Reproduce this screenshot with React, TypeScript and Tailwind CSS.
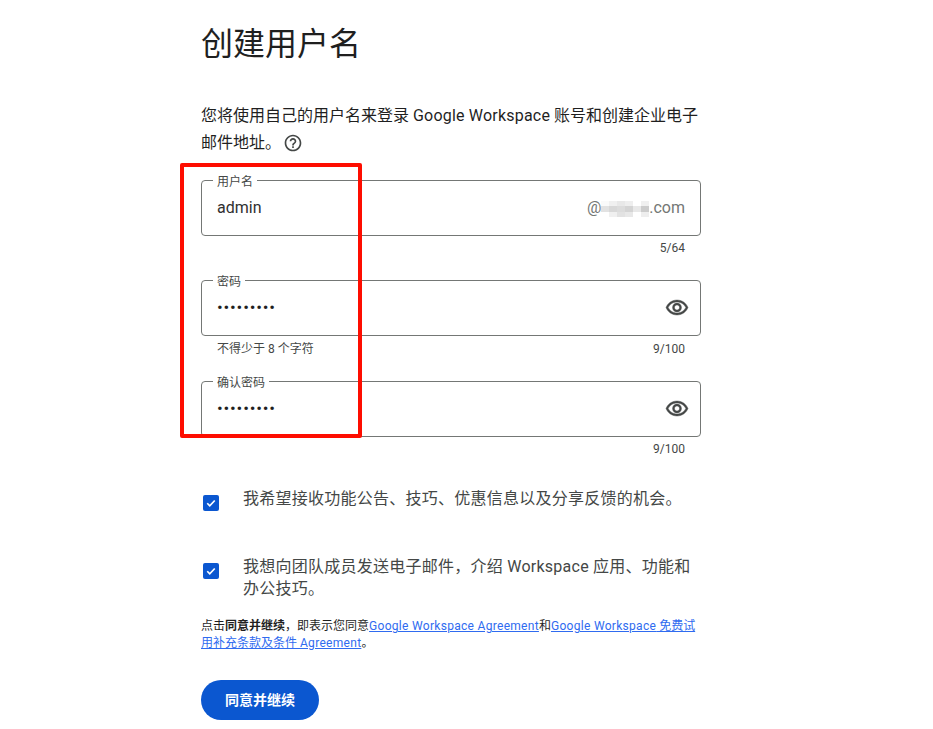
const font = { fontFamily: '"Roboto", "Noto Sans CJK SC", sans-serif' };

const EYE =
  "M12 6c3.79 0 7.17 2.13 8.82 5.5C19.17 14.87 15.79 17 12 17s-7.17-2.13-8.82-5.5C4.83 8.13 8.21 6 12 6m0-2C7 4 2.73 7.11 1 11.5 2.73 15.89 7 19 12 19s9.27-3.11 11-7.5C21.27 7.11 17 4 12 4zm0 5c1.38 0 2.5 1.12 2.5 2.5S13.38 14 12 14s-2.5-1.12-2.5-2.5S10.62 9 12 9m0-2c-2.48 0-4.5 2.02-4.5 4.5S9.52 16 12 16s4.5-2.02 4.5-4.5S14.48 7 12 7z";
const HELP =
  "M11 18h2v-2h-2v2zm1-16C6.48 2 2 6.48 2 12s4.48 10 10 10 10-4.48 10-10S17.52 2 12 2zm0 18c-4.41 0-8-3.59-8-8s3.59-8 8-8 8 3.59 8 8-3.59 8-8 8zm0-14c-2.21 0-4 1.79-4 4h2c0-1.1.9-2 2-2s2 .9 2 2c0 2-3 1.75-3 5h2c0-2.25 3-2.5 3-5 0-2.21-1.79-4-4-4z";

function Eye() {
  return (
    <svg width="24" height="24" viewBox="0 0 24 24" fill="#444746" stroke="#444746" strokeWidth="0.4" className="-mr-[4px]">
      <path d={EYE} />
    </svg>
  );
}

function Field({ label, value, right, dots }: { label: string; value: string; right?: React.ReactNode; dots?: boolean }) {
  return (
    <div className="relative flex h-14 items-center justify-between rounded border border-[#747775] px-[15px]">
      <span className="absolute -top-[6px] left-[11px] bg-white px-1 text-xs leading-[14px] text-[#444746]">{label}</span>
      <span className={dots ? "-mt-[1px] text-[17px] tracking-[0.8px] text-[#1f1f1f]" : "-mt-[1px] text-base text-[#303030]"}>{value}</span>
      {right}
    </div>
  );
}

function Check() {
  return (
    <span className="flex h-4 w-4 shrink-0 items-center justify-center rounded-[2px] bg-[#0b57d0]">
      <svg width="12" height="12" viewBox="0 0 24 24" fill="none" stroke="white" strokeWidth="3.4">
        <path d="M4.5 12.5l5 5L19.5 7" />
      </svg>
    </span>
  );
}

const topTiles = ["bg-[#fafafa]", "bg-[#f0f0f0]", "bg-[#e8e8e8]", "bg-[#eeeeee]", "bg-white", "bg-[#f0f0f0]"];
const midTiles = ["bg-[#e2e2e2]", "bg-[#d8d8d8]", "bg-[#dcdcdc]", "bg-[#d4d4d4]", "bg-[#e8e8e8]", "bg-[#cccccc]"];
const lowTiles = ["bg-white", "bg-[#f0f0f0]", "bg-[#e2e2e2]", "bg-[#e8e8e8]", "bg-white", "bg-[#eeeeee]"];

function Blur() {
  const rows = [
    { cls: "h-[5px]", tiles: topTiles },
    { cls: "h-[6px]", tiles: midTiles },
    { cls: "h-[5px]", tiles: lowTiles },
  ];
  return (
    <span className="flex w-[48px] translate-y-[1px] flex-col">
      {rows.map((r, i) => (
        <span key={i} className={`flex ${r.cls}`}>
          {r.tiles.map((t, j) => (
            <span key={j} className={`w-[8px] ${t}`} />
          ))}
        </span>
      ))}
    </span>
  );
}

export default function App() {
  return (
    <div className="relative h-[729px] w-[933px] overflow-hidden bg-white" style={font}>
      <div className="ml-[201px] flex w-[500px] flex-col">
        <h1 className="mt-[24px] text-[32px] leading-10 text-[#1f1f1f]">创建用户名</h1>
        <p className="mt-[38px] text-base leading-[27px] text-[#1f1f1f]">
          您将使用自己的用户名来登录 <span className="tracking-[0.2px]">Google Workspace</span> 账号和创建企业电子邮件地址。
          <svg className="ml-[2px] inline-block align-[-5px]" width="20" height="20" viewBox="0 0 24 24" fill="#444746">
            <path d={HELP} />
          </svg>
        </p>

        <div className="mt-[24px]">
          <Field
            label="用户名"
            value="admin"
            right={
              <span className="flex items-center text-base text-[#747775]">
                @
                <Blur />
                .com
              </span>
            }
          />
          <div className="mt-[4px] flex justify-end pr-4 text-xs leading-[16px] text-[#444746]">5/64</div>
        </div>

        <div className="mt-[24px]">
          <Field label="密码" value="•••••••••" dots right={<Eye />} />
          <div className="mt-[5px] flex justify-between px-4 text-xs leading-[16px] text-[#444746]">
            <span>不得少于 8 个字符</span>
            <span>9/100</span>
          </div>
        </div>

        <div className="mt-[24px]">
          <Field label="确认密码" value="•••••••••" dots right={<Eye />} />
          <div className="mt-[4px] flex justify-end pr-4 text-xs leading-[16px] text-[#444746]">9/100</div>
        </div>

        <div className="mt-[31px] flex items-start pl-[2px]">
          <span className="mt-[7px]"><Check /></span>
          <span className="ml-6 text-base leading-[22px] tracking-[0.25px] text-[#444746]">我希望接收功能公告、技巧、优惠信息以及分享反馈的机会。</span>
        </div>

        <div className="mt-[45px] flex items-start pl-[2px]">
          <span className="mt-[7px]"><Check /></span>
          <span className="ml-6 text-base leading-[22px] tracking-[0.25px] text-[#444746]">我想向团队成员发送电子邮件，介绍 Workspace 应用、功能和办公技巧。</span>
        </div>

        <p className="mt-[18px] text-xs leading-[17px] text-[#1f1f1f]">
          点击<b>同意并继续</b>，即表示您同意
          <a className="text-[#2f6bf0] underline" href="#"><span className="tracking-[0.3px]">Google Workspace Agreement</span></a>和
          <a className="text-[#2f6bf0] underline" href="#"><span className="tracking-[0.3px]">Google Workspace</span> 免费试用补充条款及条件 <span className="tracking-[0.3px]">Agreement</span></a>。
        </p>

        <button className="mt-[28px] h-10 w-[118px] rounded-full bg-[#0b57d0] text-sm font-bold text-white">同意并继续</button>
      </div>

      <div className="pointer-events-none absolute left-[180px] top-[163px] h-[275px] w-[182px] rounded-[2px] border-4 border-[#fe0d00]" />
    </div>
  );
}
